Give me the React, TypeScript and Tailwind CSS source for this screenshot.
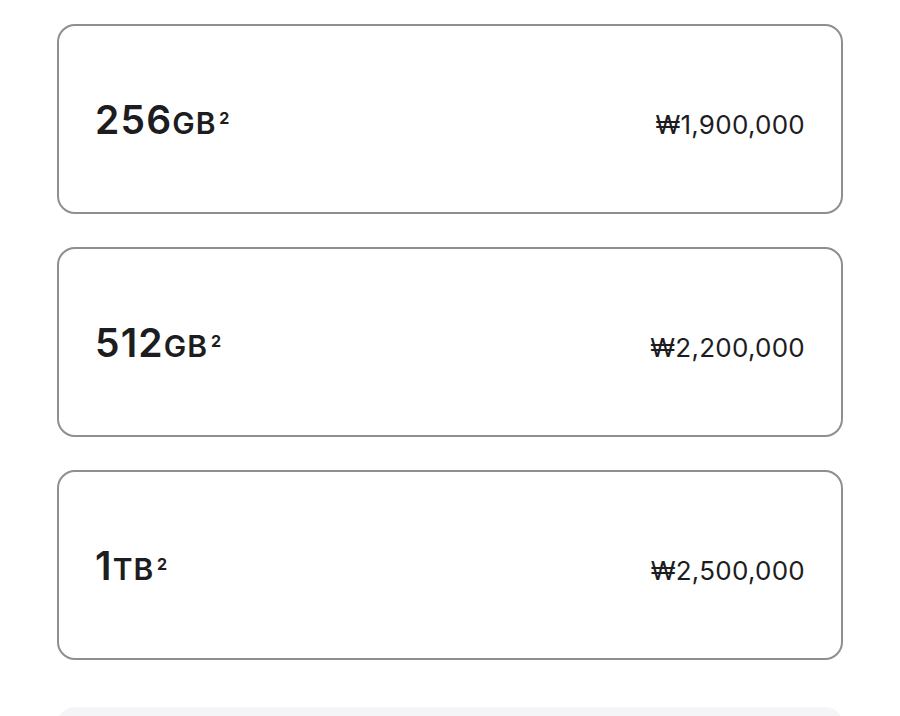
import React from 'react';

interface Option {
    size: string;
    unit: string;
    price: string;
}

const options: Option[] = [
    { size: '256', unit: 'GB', price: '₩1,900,000' },
    { size: '512', unit: 'GB', price: '₩2,200,000' },
    { size: '1', unit: 'TB', price: '₩2,500,000' },
];

const StorageCard: React.FC<{ option: Option }> = ({ option }) => (
    <div className="h-[190px] rounded-[18px] border-2 border-[#8e8e93] bg-white flex items-center justify-between pl-[36px] pr-[36px]">
        <p className="text-[#1d1d1f] font-semibold leading-none flex items-baseline">
            <span className="text-[39px] tracking-[0.03em]">{option.size}</span>
            <span className="text-[30px] tracking-[0.03em]">{option.unit}</span>
            <span className="text-[16px] font-bold relative top-[-10px] ml-[3px]">2</span>
        </p>
        <p className="text-[#1d1d1f] text-[26px] tracking-[0.01em] mt-[10px]">{option.price}</p>
    </div>
);

export default function App() {
    return (
        <div className="w-[900px] h-[716px] overflow-hidden bg-white" style={{ fontFamily: 'Inter, "Liberation Sans", Arial, sans-serif' }}>
            <div className="px-[57px] pt-[24px] flex flex-col gap-[33px]">
                {options.map((o) => (
                    <StorageCard key={o.size} option={o} />
                ))}
                <div className="h-[120px] rounded-[18px] bg-[#f5f5f7] mt-[14px]" />
            </div>
        </div>
    );
}
